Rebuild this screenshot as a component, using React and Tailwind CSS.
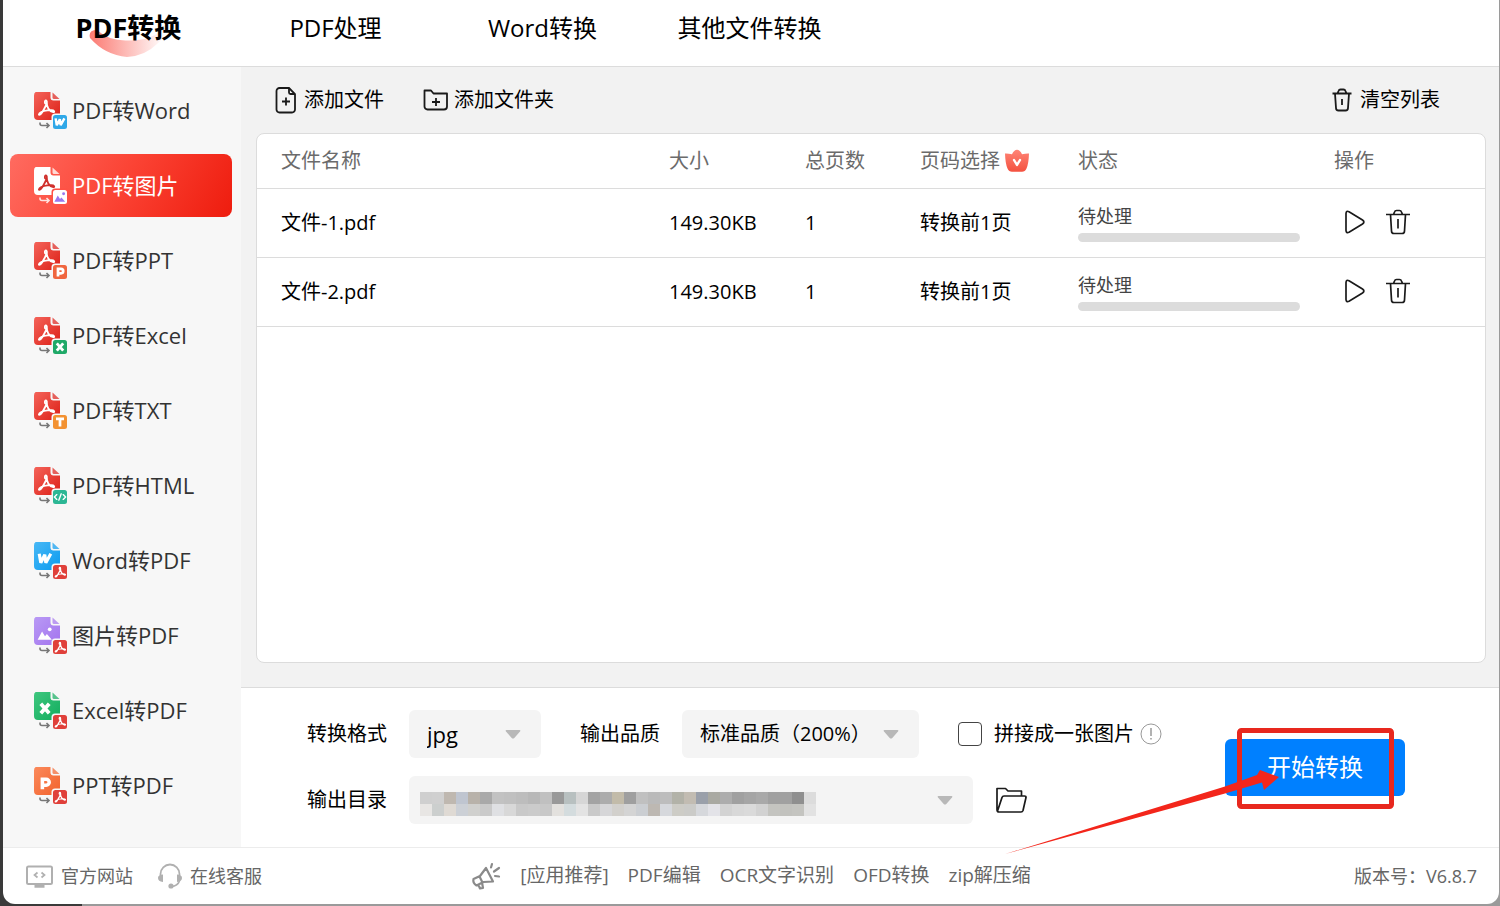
import { useState } from "react"

const tabs = ['PDF转换', 'PDF处理', 'Word转换', '其他文件转换']

const menu = [
  { label: 'PDF转Word', from: 'pdf', to: 'w' },
  { label: 'PDF转图片', from: 'pdf', to: 'img' },
  { label: 'PDF转PPT', from: 'pdf', to: 'p' },
  { label: 'PDF转Excel', from: 'pdf', to: 'x' },
  { label: 'PDF转TXT', from: 'pdf', to: 't' },
  { label: 'PDF转HTML', from: 'pdf', to: 'html' },
  { label: 'Word转PDF', from: 'w', to: 'pdf' },
  { label: '图片转PDF', from: 'img', to: 'pdf' },
  { label: 'Excel转PDF', from: 'x', to: 'pdf' },
  { label: 'PPT转PDF', from: 'p', to: 'pdf' },
]

const pageColors = {
  pdf: ['#f4645a', '#dd2018'],
  w: ['#49b8f5', '#0a9bf0'],
  img: ['#b99af5', '#a374ee'],
  x: ['#3fc77f', '#12ad5e'],
  p: ['#fb8a5c', '#f2622c'],
}

const badgeColors = {
  pdf: '#e0403a',
  w: '#2fa8e8',
  img: '#ffffff',
  p: '#f0663f',
  x: '#1fa968',
  t: '#f39232',
  html: '#2cb795',
}

const files = [
  { id: 1, name: '文件-1.pdf', size: '149.30KB', pages: 1, range: '转换前1页', status: '待处理' },
  { id: 2, name: '文件-2.pdf', size: '149.30KB', pages: 1, range: '转换前1页', status: '待处理' },
]

const apps = ['[应用推荐]', 'PDF编辑', 'OCR文字识别', 'OFD转换', 'zip解压缩']

const maskRows = [
  ['#cfcfcf', '#d0d0d0', '#bfb8b0', '#bfc5d0', '#b8b2aa', '#a9a9a9', '#c2c2c2', '#c0c0c0', '#bdbdbd', '#b8b8b8', '#c0c0c0', '#999999', '#b8c0c0', '#d6d6d6', '#a3a3a3', '#acacac', '#c2bba9', '#9f9f9f', '#c0c0c0', '#bababa', '#bdbdbd', '#b2b2a8', '#c2bcb2', '#9aa0aa', '#a9a9a2', '#adadad', '#a0a0a0', '#a5a5a5', '#a9a9a9', '#a0a0a0', '#a0a0a0', '#8f8f8f', '#dcdcdc'],
  ['#e8e6e4', '#cccfce', '#dfdad4', '#ccd0d6', '#d0d0ce', '#cacaca', '#dfe0e3', '#d8d8d8', '#c9c9c9', '#cbcbcb', '#c8c8c8', '#e3e1de', '#d4dcde', '#e3e3e3', '#c9c9c9', '#d6d6d8', '#d2d0cc', '#d4d4d4', '#cbced2', '#bdb8b2', '#d6d8dc', '#cdccc6', '#cbcbc8', '#d6d8dc', '#e3e3e8', '#d3d3d3', '#d8d8d8', '#dadada', '#d2d2d2', '#c4c4c0', '#c2c2be', '#c4c4c0', '#e2e2e2'],
]

const Glyph = ({ type, color }) => {
  if (type === 'pdf') {
    return (
      <path
        d="M-.8-3.500C-1.600-6.500 1-6.800.7-4 .4-1 2.500 3.200 6 3.800 7.500 4 7 2.200 4.500 2.200 0 2.300-4 3.500-5.500 5-6.800 6.500-4.800 6.800-3.500 4.500-2 2 0-1 .6-4"
        fill="none" stroke={color} strokeWidth="1.500" strokeLinecap="round" strokeLinejoin="round"
      />
    )
  }
  if (type === 'img') {
    return (
      <g fill={color}>
        <path d="M-7 6-2.800-2 0 2.500 1.800.5 6.500 6z" />
        <circle cx="4.500" cy="-4" r="1.800" />
      </g>
    )
  }
  if (type === 'w') {
    return <path d="M-5.500-4.500-4 4-.2-3.500.8 4 5.500-4.500" fill="none" stroke={color} strokeWidth="3" strokeLinejoin="bevel" />
  }
  if (type === 'p') {
    return <path d="M-2.500 5.500V-4H1.200a2.800 2.800 0 0 1 0 5.600H-2.500" fill="none" stroke={color} strokeWidth="3.400" />
  }
  if (type === 'x') {
    return <path d="M-4-4.500 4 4.500M4-4.500-4 4.500" fill="none" stroke={color} strokeWidth="3.600" />
  }
  if (type === 't') {
    return <path d="M-5-4H5M0-4V5.500" fill="none" stroke={color} strokeWidth="3.400" />
  }
  return (
    <path
      d="M-4-3-7 0-4 3M4-3 7 0 4 3M1.500-4-1.500 4"
      fill="none" stroke={color} strokeWidth="1.700" strokeLinecap="round"
    />
  )
}

const ConvertIcon = ({ from, to, active }) => {
  const gradientId = `page-${from}-${to}`
  const [start, end] = active ? ['#ffffff', '#ffffff'] : pageColors[from]
  const badgeGlyph = to === 'img' ? '#9a78ee' : '#ffffff'
  return (
    <svg viewBox="0 1 34 38" className="h-[38px] w-[34px] shrink-0" aria-hidden="true">
      <defs>
        <linearGradient id={gradientId} x1="0" y1="0" x2="1" y2="1">
          <stop offset="0" stopColor={start} />
          <stop offset="1" stopColor={end} />
        </linearGradient>
      </defs>
      <path
        d="M4 .5H16.500V6.500a3 3 0 0 0 3 3H26V25a4 4 0 0 1-4 4H4a4 4 0 0 1-4-4V4.500a4 4 0 0 1 4-4z"
        fill={`url(#${gradientId})`}
      />
      <path d="M18.500 1.500 25.500 8H20a1.500 1.500 0 0 1-1.500-1.500z" fill={active ? '#ffd9d5' : end} opacity={active ? 1 : 0.7} />
      <g transform={from === 'pdf' ? 'translate(12 16.500) scale(1.200)' : 'translate(11 17.500) scale(1.050)'}>
        <Glyph type={from} color={active ? '#d0302c' : '#ffffff'} />
      </g>
      <path
        d="M6 31.500v1q0 2 2 2h6.500M12.500 32l2.500 2.500-2.500 2.500"
        fill="none" stroke={active ? '#ffe3e0' : '#777777'} strokeWidth="1.600"
      />
      <rect x="17.500" y="22.500" width="17" height="17" rx="3.500" fill={active ? '#ff5145' : '#f7f7f7'} />
      <rect x="19" y="24" width="14" height="14" rx="2.500" fill={badgeColors[to]} />
      <g transform="translate(26 31) scale(.8)">
        <Glyph type={to} color={badgeGlyph} />
      </g>
    </svg>
  )
}

const AddFileIcon = () => (
  <svg viewBox="0 0 22 28" className="h-7 w-[22px]" fill="none" stroke="#1a1a1a" strokeWidth="1.800" aria-hidden="true">
    <path d="M4.500 2H14l6 6v15.500a3 3 0 0 1-3 3H4.500a3 3 0 0 1-3-3V5a3 3 0 0 1 3-3z" />
    <path d="M14 2v4.500A1.500 1.500 0 0 0 15.500 8H20" />
    <path d="M11 11.500v8M7 15.500h8" />
  </svg>
)

const AddFolderIcon = () => (
  <svg viewBox="0 0 26 22" className="h-[22px] w-[26px]" fill="none" stroke="#1a1a1a" strokeWidth="1.800" aria-hidden="true">
    <path d="M1.500 1.500H8l2.500 3h13.500v13a3 3 0 0 1-3 3H4.500a3 3 0 0 1-3-3z" strokeLinejoin="round" />
    <path d="M13 9v8M9 13h8" />
  </svg>
)

const SmallTrashIcon = () => (
  <svg viewBox="0 0 20 24" className="h-6 w-5" fill="none" stroke="#1a1a1a" strokeWidth="1.800" aria-hidden="true">
    <path d="M.5 5.500h19M5.500 5.500 6.500 3q.5-1.500 2-1.500h3q1.500 0 2 1.500l1 2.500M3 5.500 4 20a2.500 2.500 0 0 0 2.500 2.500h7A2.500 2.500 0 0 0 16 20L17 5.500M10 11v6" />
  </svg>
)

const TrashIcon = () => (
  <svg viewBox="0 0 24 26" className="h-[26px] w-6" fill="none" stroke="#1a1a1a" strokeWidth="1.700" aria-hidden="true">
    <path d="M0 5.500h24M7.500 5.500 8.500 3q.5-1.500 2-1.500h3q1.500 0 2 1.500l1 2.500M4.500 5.500 5.500 22A2.500 2.500 0 0 0 8 24.500h8a2.500 2.500 0 0 0 2.500-2.500L19.500 5.500M12 10v9.500" />
  </svg>
)

const PlayIcon = () => (
  <svg viewBox="0 0 22 26" className="h-[26px] w-[22px]" fill="none" stroke="#1a1a1a" strokeWidth="1.700" aria-hidden="true">
    <path d="M2 4.500Q2.200 1.200 5 2.700L18.500 11q2.800 2 0 4L5 23.300Q2.200 24.500 2 21.500z" />
  </svg>
)

const VipIcon = () => (
  <svg viewBox="0 0 26 24" className="h-6 w-[26px]" aria-hidden="true">
    <defs>
      <linearGradient id="vip" x1="0" y1="0" x2="0" y2="1">
        <stop offset="0" stopColor="#ff8577" />
        <stop offset="1" stopColor="#f4513f" />
      </linearGradient>
    </defs>
    <path d="M1 4.500q3-.2 7 .8Q10 1 13 .8q3 .2 5 4.500 4-1 7-.8-.3 10-2.500 15Q21 22.800 18 22.800H8Q5 22.800 3.500 19.500 1.300 14.500 1 4.500z" fill="url(#vip)" />
    <path d="M10 11 13 16l3-5" fill="none" stroke="#fff" strokeWidth="2.400" strokeLinecap="round" strokeLinejoin="round" />
  </svg>
)

const FolderOpenIcon = () => (
  <svg viewBox="0 0 32 26" className="h-[26px] w-8" fill="none" stroke="#1a1a1a" strokeWidth="1.700" strokeLinejoin="round" aria-hidden="true">
    <path d="M2 22.500V1.500h8.500L13 4h13.500v5M2 22.500Q2 25 4 25h22q1.500 0 2-1.500L31 10.500Q31.200 9 29.500 9H9Q7.500 9 7 10.500L2.500 24" />
  </svg>
)

const SiteIcon = () => (
  <svg viewBox="0 0 28 24" className="h-6 w-7" fill="none" stroke="#b0b0b0" strokeWidth="2" aria-hidden="true">
    <rect x="2" y="2.500" width="25" height="17.500" rx="1.500" />
    <path d="M12.500 8.500 9.500 11l3 2.500M16.500 8.500l3 2.500-3 2.500" strokeWidth="1.700" />
    <path d="M9.500 22h10" strokeWidth="3.400" />
  </svg>
)

const ServiceIcon = () => (
  <svg viewBox="0 0 26 26" className="h-[26px] w-[26px]" fill="none" stroke="#b0b0b0" strokeWidth="1.800" aria-hidden="true">
    <path d="M3.500 12.500V11a9.500 9.500 0 0 1 19 0v1.500M22.500 18q-2 5-8 5.500" />
    <path d="M6 11.500v7.500Q1 18.500 1 15t5-3.500zM20 11.500v7.500Q25 18.500 25 15t-5-3.500z" fill="#b0b0b0" stroke="none" />
    <circle cx="14" cy="23" r="2.600" fill="#b0b0b0" stroke="none" />
  </svg>
)

const HornIcon = () => (
  <svg viewBox="0 0 30 28" className="h-7 w-[30px]" fill="none" stroke="#8a8a8a" strokeWidth="2.200" strokeLinejoin="round" aria-hidden="true">
    <path d="M2.500 17 9 14 15 6l7 13.500-9.500.5L5.500 23.500Q1.500 21 2.500 17zM8.500 14.500l3 6M7.500 23l1.500 3.500 3-.5-.8-4.500" />
    <path d="M20 5.500l1-3.500M23 9.500l5-3.500M24 14l4 .5" strokeLinecap="round" />
  </svg>
)

const Caret = () => (
  <span className="pointer-events-none absolute inset-y-0 right-5 flex items-center">
    <svg viewBox="0 0 16 10" className="h-[10px] w-4" aria-hidden="true">
      <path d="M1.500 1h13q1.500.3.500 1.500L9.300 9q-1.300 1.200-2.600 0L1 2.500Q0 1.300 1.500 1z" fill="#b8b8b8" />
    </svg>
  </span>
)

const selectStyle = "h-12 w-full appearance-none rounded-md bg-[#f4f4f4] pl-[18px] pr-10 text-black outline-none"

export default function App() {

  const [tab, setTab] = useState('PDF转换')
  const [current, setCurrent] = useState('PDF转图片')
  const [list, setList] = useState(files)
  const [options, setOptions] = useState({ format: 'jpg', quality: '200', folder: 'default', merge: false })

  const handleChange = (e) => {
    const { id, value, type, checked } = e.target
    setOptions({ ...options, [id]: type === 'checkbox' ? checked : value })
  }

  const handleRemove = (id) => {
    setList(list.filter(file => file.id !== id))
  }

  return (
    <div className="h-screen overflow-hidden bg-[linear-gradient(to_right,#3a3a3a_82px,#9a9a9a_82px)] pb-[2px] pl-[3px] pr-px font-['Open_Sans','Noto_Sans_CJK_SC',sans-serif] text-xl text-black">
      <div className="flex h-full flex-col overflow-hidden rounded-b-xl bg-white">

        <header className="flex h-[67px] shrink-0 items-start border-b border-[#dcdcdc] pl-[22px]">
          {tabs.map(name => (
            <button
              key={name}
              onClick={() => setTab(name)}
              className={`relative flex h-14 w-[207px] items-center justify-center whitespace-nowrap ${name === tab ? 'text-[27px] font-bold' : 'text-2xl'}`}
            >
              {name === tab && (
                <svg viewBox="0 0 78 30" className="absolute bottom-[-1px] left-[64px] h-[30px] w-[78px]" aria-hidden="true">
                  <defs>
                    <linearGradient id="smile" x1="0" y1="0" x2="1" y2="0">
                      <stop offset="0" stopColor="#fb7a72" />
                      <stop offset="1" stopColor="#fff" />
                    </linearGradient>
                  </defs>
                  <path d="M1 11Q-1 3 8 3 20 14 38 13.500 62 14 74 2 80 6 68 17 56 29 38 30 16 28 1 11z" fill="url(#smile)" />
                </svg>
              )}
              <span className="relative">{name}</span>
            </button>
          ))}
        </header>

        <div className="flex min-h-0 flex-1">
          <nav className="flex w-[238px] shrink-0 flex-col gap-3 bg-[#f7f7f7] pl-[7px] pr-[9px] pt-3">
            {menu.map(item => (
              <button
                key={item.label}
                onClick={() => setCurrent(item.label)}
                className={`flex h-[63px] shrink-0 items-center gap-1 rounded-lg pl-6 text-[22px] ${item.label === current ? 'bg-[linear-gradient(120deg,#ff6b60,#fb4334_50%,#ee1c0e)] text-white' : 'text-[#333]'}`}
              >
                <ConvertIcon from={item.from} to={item.to} active={item.label === current} />
                <span>{item.label}</span>
              </button>
            ))}
          </nav>

          <main className="flex min-w-0 flex-1 flex-col">
            <section className="flex min-h-0 flex-1 flex-col bg-[#f2f2f2] pb-6 pl-[15px] pr-[13px]">
              <div className="flex h-[66px] shrink-0 items-center pl-[19px] pr-[46px]">
                <button className="flex items-center gap-[7px]"><AddFileIcon />添加文件</button>
                <button className="ml-[39px] flex items-center gap-[5px]"><AddFolderIcon />添加文件夹</button>
                <button onClick={() => setList([])} className="ml-auto flex items-center gap-2"><SmallTrashIcon />清空列表</button>
              </div>

              <div className="flex-1 overflow-hidden rounded-lg border border-[#dcdcdc] bg-white">
                <table className="w-full table-fixed border-collapse text-left">
                  <colgroup>
                    <col />
                    <col className="w-[136px]" />
                    <col className="w-[115px]" />
                    <col className="w-[158px]" />
                    <col className="w-[256px]" />
                    <col className="w-[151px]" />
                  </colgroup>
                  <thead>
                    <tr className="h-[54px] border-b border-[#dcdcdc] text-[#6b6b6b] *:font-normal">
                      <th className="pl-6">文件名称</th>
                      <th>大小</th>
                      <th>总页数</th>
                      <th>
                        <span className="flex items-center gap-1">页码选择<VipIcon /></span>
                      </th>
                      <th>状态</th>
                      <th>操作</th>
                    </tr>
                  </thead>
                  <tbody>
                    {list.map(file => (
                      <tr key={file.id} className="h-[69px] border-b border-[#dcdcdc]">
                        <td className="pl-6">{file.name}</td>
                        <td>{file.size}</td>
                        <td>{file.pages}</td>
                        <td>{file.range}</td>
                        <td>
                          <div className="text-lg leading-6 text-[#444]">{file.status}</div>
                          <div className="mr-[34px] mt-[5px] h-[9px] rounded-full bg-[#dcdcdc]"></div>
                        </td>
                        <td>
                          <div className="flex items-center gap-5 pb-[2px] pl-[10px]">
                            <button aria-label="开始"><PlayIcon /></button>
                            <button aria-label="删除" onClick={() => handleRemove(file.id)}><TrashIcon /></button>
                          </div>
                        </td>
                      </tr>
                    ))}
                  </tbody>
                </table>
              </div>
            </section>

            <section className="flex shrink-0 items-center border-t border-[#dcdcdc] pb-[23px] pl-[66px] pr-[94px] pt-[22px]">
              <div className="flex flex-col gap-[18px]">
                <div className="flex items-center">
                  <label htmlFor="format" className="w-[102px]">转换格式</label>
                  <div className="relative w-[132px]">
                    <select id="format" value={options.format} onChange={handleChange} className={`${selectStyle} text-[22px]`}>
                      <option value="jpg">jpg</option>
                      <option value="png">png</option>
                    </select>
                    <Caret />
                  </div>
                  <label htmlFor="quality" className="ml-[39px] w-[102px]">输出品质</label>
                  <div className="relative w-[237px]">
                    <select id="quality" value={options.quality} onChange={handleChange} className={selectStyle}>
                      <option value="200">标准品质（200%）</option>
                    </select>
                    <Caret />
                  </div>
                  <input
                    type="checkbox" id="merge" checked={options.merge} onChange={handleChange}
                    className="ml-[39px] size-6 appearance-none rounded-sm border border-[#444] bg-white checked:bg-[#0080ff]"
                  />
                  <label htmlFor="merge" className="ml-3 whitespace-nowrap">拼接成一张图片</label>
                  <svg viewBox="0 0 22 22" className="ml-[6px] size-[22px]" fill="none" stroke="#999" aria-hidden="true">
                    <circle cx="11" cy="11" r="10" />
                    <path d="M11 5v8M11 15v1.500" strokeWidth="1.500" />
                  </svg>
                </div>

                <div className="flex items-center">
                  <label htmlFor="folder" className="w-[102px]">输出目录</label>
                  <div className="relative w-[564px]">
                    <select id="folder" value={options.folder} onChange={handleChange} className={selectStyle}>
                      <option value="default"></option>
                    </select>
                    <svg viewBox="0 0 396 24" className="pointer-events-none absolute left-[11px] top-4 h-6 w-[396px]" shapeRendering="crispEdges" aria-hidden="true">
                      {maskRows.map((row, y) => row.map((color, x) => (
                        <rect key={`${x}-${y}`} x={x * 12} y={y * 12} width="12" height="12" fill={color} />
                      )))}
                    </svg>
                    <Caret />
                  </div>
                  <button aria-label="打开目录" className="ml-[22px]"><FolderOpenIcon /></button>
                </div>
              </div>

              <div className="relative ml-auto shrink-0">
                <button className="block h-[57px] w-[180px] rounded-md bg-[#0080ff] text-2xl text-white">开始转换</button>
                <svg viewBox="0 0 392 132" className="pointer-events-none absolute left-[-221px] top-[-14px] h-[132px] w-[392px]" aria-hidden="true">
                  <rect x="235.500" y="5.500" width="152" height="76" rx="2" fill="none" stroke="#e8281e" strokeWidth="5" />
                  <path d="M1 129 221 61.500 253 50 256 45 275 52 260 65 258 57.500 221 68.500z" fill="#f3261b" />
                </svg>
              </div>
            </section>
          </main>
        </div>

        <footer className="grid h-[57px] shrink-0 grid-cols-[1fr_auto_1fr] items-center border-t border-[#ececec] px-[22px] text-lg text-[#666]">
          <div className="flex items-center gap-6">
            <a href="#site" className="flex items-center gap-2"><SiteIcon />官方网站</a>
            <a href="#service" className="flex items-center gap-[7px]"><ServiceIcon />在线客服</a>
          </div>
          <div className="flex items-center gap-[19px] text-[19px]">
            <HornIcon />
            {apps.map((app, i) => (
              i === 0 ? <span key={app}>{app}</span> : <a key={app} href={`#app-${i}`}>{app}</a>
            ))}
          </div>
          <div className="text-right">版本号：V6.8.7</div>
        </footer>
      </div>
    </div>
  )
}
